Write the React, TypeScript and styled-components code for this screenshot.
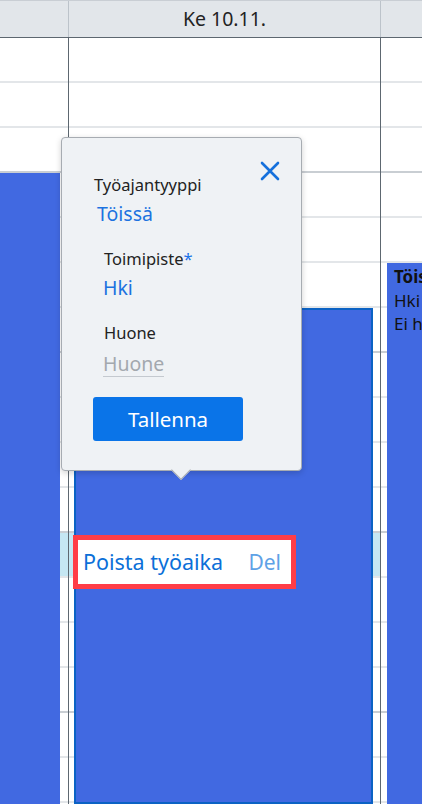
import React from 'react';
import styled, { createGlobalStyle } from 'styled-components';

const GlobalStyle = createGlobalStyle`
  html, body {
    margin: 0;
    padding: 0;
    background: #ffffff;
    overflow: hidden;
  }
  body {
    font-family: 'Noto Sans', 'Open Sans', Arial, sans-serif;
  }
`;

const SLOT_HEIGHT = 45;
const SLOT_COUNT = 17;
const HIGHLIGHT_SLOT = 11;

const Page = styled.div`
  position: relative;
  width: 422px;
  height: 804px;
  overflow: hidden;
  display: flex;
  flex-direction: column;
`;

const Header = styled.div`
  display: grid;
  grid-template-columns: 69px 312px 1fr;
  height: 38px;
  flex-shrink: 0;
  background: #e2e6ea;
  border-top: 1px solid #c9ced4;
  border-bottom: 1px solid #5d6770;
  box-sizing: border-box;
`;

const HeaderCell = styled.div`
  display: flex;
  align-items: center;
  justify-content: center;
  border-right: 1px solid #bcc3ca;
  font-size: 19.5px;
  color: #222;
  padding-bottom: 1px;

  &:last-child {
    border-right: none;
  }
`;

const Body = styled.div`
  flex: 1;
  display: grid;
  grid-template-columns: 69px 312px 1fr;
`;

const Column = styled.div`
  position: relative;
  border-right: 1px solid #5d6770;
  overflow: hidden;

  &:last-child {
    border-right: none;
  }
`;

const Slot = styled.div<{ $hour?: boolean; $active?: boolean }>`
  height: ${SLOT_HEIGHT}px;
  box-sizing: border-box;
  border-bottom: ${p => (p.$hour ? '2px solid #c9ced3' : '2px solid #e3e6e9')};
  background: ${p => (p.$active ? '#c5e7f3' : '#ffffff')};
`;

const Event = styled.div<{ $outlined?: boolean }>`
  position: absolute;
  bottom: 0;
  background: #4169e1;
  box-sizing: border-box;
  border: ${p => (p.$outlined ? '2px solid #0b62c4' : 'none')};
  padding: 2px 7px;
  color: #111;
  font-size: 17px;
  line-height: 23.5px;
  white-space: nowrap;
`;

const EventTitle = styled.div`
  font-weight: 700;
`;

const Popover = styled.div`
  position: absolute;
  left: 61px;
  top: 137px;
  width: 241px;
  height: 334px;
  box-sizing: border-box;
  background: #eff2f5;
  border: 1px solid #a7acb2;
  border-radius: 4px;
  box-shadow: 0 2px 6px rgba(0, 0, 0, 0.18);
  padding: 36px 0 0 32px;

  &::after {
    content: '';
    position: absolute;
    left: 112px;
    bottom: -7px;
    width: 13px;
    height: 13px;
    background: #eff2f5;
    border-right: 1px solid #a7acb2;
    border-bottom: 1px solid #a7acb2;
    transform: rotate(45deg);
  }
`;

const CloseButton = styled.button`
  position: absolute;
  top: 21px;
  right: 19px;
  width: 24px;
  height: 24px;
  padding: 0;
  border: none;
  background: none;
  display: flex;
  align-items: center;
  justify-content: center;
  cursor: pointer;
`;

const Field = styled.div<{ $indent: number }>`
  margin-left: ${p => p.$indent}px;
  margin-bottom: 21px;
`;

const FieldLabel = styled.div`
  font-size: 16.5px;
  line-height: 22px;
  color: #222;
`;

const Required = styled.span`
  color: #1a73e8;
`;

const FieldValue = styled.div<{ $shift: number }>`
  margin-left: ${p => p.$shift}px;
  margin-top: 5px;
  font-size: 19.5px;
  line-height: 26px;
  color: #1c72e0;
`;

const Placeholder = styled.div`
  display: inline-block;
  margin-top: 8px;
  margin-left: -1px;
  font-size: 19.5px;
  line-height: 24px;
  color: #a3a8ae;
  border-bottom: 1px solid #c4c9cf;
`;

const SaveButton = styled.button`
  display: block;
  width: 150px;
  height: 44px;
  margin-left: -1px;
  margin-top: -1px;
  border: none;
  border-radius: 3px;
  background: #0a74e8;
  color: #fff;
  font-family: inherit;
  font-size: 20.5px;
  cursor: pointer;
`;

const MenuOutline = styled.div`
  position: absolute;
  left: 73px;
  top: 535px;
  width: 223px;
  height: 54px;
  box-sizing: border-box;
  border: 5px solid #ff3d47;
  background: #ffffff;
  display: flex;
  align-items: center;
  justify-content: space-between;
  padding: 0 10px 1px 5px;
`;

const MenuLabel = styled.span`
  font-size: 21.5px;
  color: #0b6fd8;
`;

const Shortcut = styled.span`
  font-size: 21px;
  color: #5fa2e6;
`;

const slotIndexes = Array.from({ length: SLOT_COUNT }, (_, i) => i);

const Slots: React.FC<{ highlight?: boolean }> = ({ highlight }) => (
  <>
    {slotIndexes.map(i => (
      <Slot key={i} $hour={i % 4 === 2} $active={highlight && i === HIGHLIGHT_SLOT} />
    ))}
  </>
);

const App: React.FC = () => {
  return (
    <Page>
      <GlobalStyle />
      <Header>
        <HeaderCell />
        <HeaderCell>Ke 10.11.</HeaderCell>
        <HeaderCell />
      </Header>

      <Body>
        <Column>
          <Slots highlight />
          <Event style={{ left: 0, right: 8, top: 135 }} />
        </Column>
        <Column>
          <Slots highlight />
          <Event $outlined style={{ left: 5, right: 7, top: 270 }} />
        </Column>
        <Column>
          <Slots />
          <Event style={{ left: 6, right: -60, top: 225 }}>
            <EventTitle>Töissä</EventTitle>
            <div>Hki</div>
            <div>Ei huonetta</div>
          </Event>
        </Column>
      </Body>

      <Popover>
        <CloseButton aria-label="Sulje">
          <svg width="20" height="20" viewBox="0 0 20 20">
            <path d="M2 2 L18 18 M18 2 L2 18" stroke="#1570dc" strokeWidth="2.6" strokeLinecap="round" />
          </svg>
        </CloseButton>

        <Field $indent={0}>
          <FieldLabel>Työajantyyppi</FieldLabel>
          <FieldValue $shift={3}>Töissä</FieldValue>
        </Field>

        <Field $indent={10}>
          <FieldLabel>
            Toimipiste<Required>*</Required>
          </FieldLabel>
          <FieldValue $shift={-1}>Hki</FieldValue>
        </Field>

        <Field $indent={10}>
          <FieldLabel>Huone</FieldLabel>
          <Placeholder>Huone</Placeholder>
        </Field>

        <SaveButton>Tallenna</SaveButton>
      </Popover>

      <MenuOutline>
        <MenuLabel>Poista työaika</MenuLabel>
        <Shortcut>Del</Shortcut>
      </MenuOutline>
    </Page>
  );
};

export default App;
